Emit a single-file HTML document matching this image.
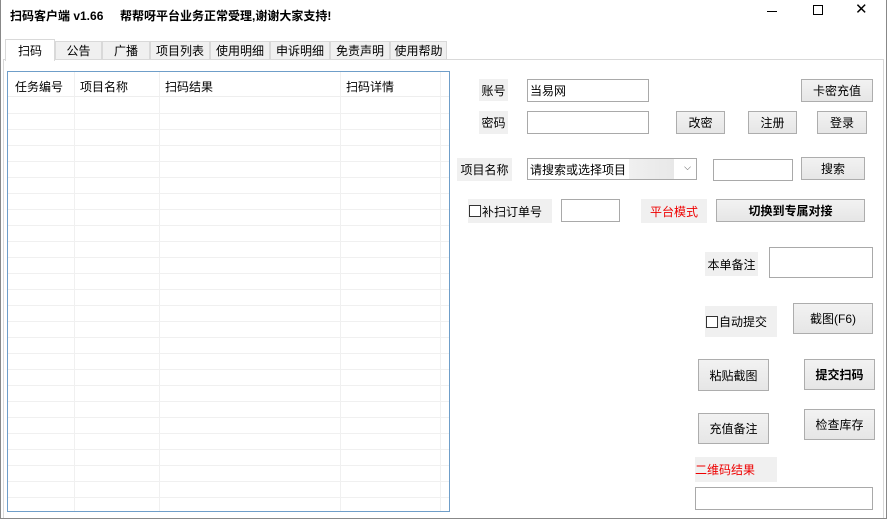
<!DOCTYPE html>
<html><head><meta charset="utf-8"><style>
*{box-sizing:border-box;margin:0;padding:0}
body{width:887px;height:519px;background:#fff;position:relative;overflow:hidden;font-family:"Liberation Sans","Noto Sans CJK SC","WenQuanYi Zen Hei",sans-serif;font-size:12px;color:#000}
.a{position:absolute}
.lbl{position:absolute;background:#f0f0f0;display:flex;align-items:center;justify-content:center;font-size:12px}
.inp{position:absolute;background:#fff;border:1px solid #a9a9a9;font-size:12px;padding-left:2px;display:flex;align-items:center}
.btn{position:absolute;background:linear-gradient(#f2f2f2,#e6e6e6);border:1px solid #adadad;display:flex;align-items:center;justify-content:center;font-size:12px}
.tab{position:absolute;top:41px;height:18px;background:#f0f0f0;border:1px solid #d9d9d9;border-bottom:none;display:flex;align-items:center;justify-content:center;font-size:12px}
.cb{display:inline-block;width:12px;height:12px;border:1px solid #333;background:#fff;margin-right:1px}
.red{color:#e00}
</style></head><body>
<div class="a" style="left:0;top:0;width:1px;height:519px;background:#888"></div>
<div class="a" style="left:886px;top:0;width:1px;height:519px;background:#888"></div>
<div class="a" style="left:0;top:518px;width:887px;height:1px;background:#888"></div>
<div class="a" style="left:10px;top:7px;font-weight:bold;font-size:12px">扫码客户端 v1.66&nbsp;&nbsp;&nbsp;&nbsp;&nbsp;帮帮呀平台业务正常受理,谢谢大家支持!</div>
<div class="a" style="left:767px;top:11px;width:10px;height:1px;background:#000"></div>
<div class="a" style="left:813px;top:5px;width:10px;height:10px;border:1px solid #000"></div>
<div class="a" style="left:855px;top:0px;font-size:15px">✕</div>
<!-- tab frame -->
<div class="a" style="left:3px;top:59px;width:881px;height:459px;border:1px solid #d9d9d9;border-bottom:none"></div>
<div class="tab" style="left:55px;width:47px">公告</div>
<div class="tab" style="left:102px;width:48px">广播</div>
<div class="tab" style="left:150px;width:60px">项目列表</div>
<div class="tab" style="left:210px;width:60px">使用明细</div>
<div class="tab" style="left:270px;width:60px">申诉明细</div>
<div class="tab" style="left:330px;width:60px">免责声明</div>
<div class="tab" style="left:390px;width:57px">使用帮助</div>
<div class="tab" style="left:5px;top:39px;height:22px;width:50px;background:#fff;border-color:#d9d9d9">扫码</div>
<!-- table -->
<div class="a" style="left:7px;top:71px;width:443px;height:441px;border:1px solid #6f9ec9;overflow:hidden">
<svg width="441" height="439" style="position:absolute;left:0;top:0">
<g stroke="#f0f0f0" stroke-width="1">
<line x1="66.5" y1="0" x2="66.5" y2="439"/><line x1="151.5" y1="0" x2="151.5" y2="439"/><line x1="332.5" y1="0" x2="332.5" y2="439"/><line x1="432.5" y1="0" x2="432.5" y2="439"/>
</g>
<g stroke="#eeeeee">
<line x1="0" y1="24.5" x2="441" y2="24.5"/>
</g>
<g stroke="#f0f0f0" id="r"></g>
</svg>
<div class="a" style="left:7px;top:6px">任务编号</div>
<div class="a" style="left:72px;top:6px">项目名称</div>
<div class="a" style="left:157px;top:6px">扫码结果</div>
<div class="a" style="left:338px;top:6px">扫码详情</div>
</div>
<script>
var g=document.getElementById('r'),s='';for(var y=41.5;y<439;y+=16)s+='<line x1="0" y1="'+y+'" x2="441" y2="'+y+'"/>';g.innerHTML=s;
</script>
<!-- right -->
<div class="lbl" style="left:479px;top:79px;width:29px;height:22px">账号</div>
<div class="inp" style="left:527px;top:79px;width:122px;height:23px">当易网</div>
<div class="btn" style="left:801px;top:79px;width:72px;height:23px">卡密充值</div>
<div class="lbl" style="left:479px;top:111px;width:29px;height:23px">密码</div>
<div class="inp" style="left:527px;top:111px;width:122px;height:23px"></div>
<div class="btn" style="left:676px;top:111px;width:49px;height:23px">改密</div>
<div class="btn" style="left:748px;top:111px;width:49px;height:23px">注册</div>
<div class="btn" style="left:817px;top:111px;width:50px;height:23px">登录</div>
<div class="lbl" style="left:457px;top:158px;width:55px;height:23px">项目名称</div>
<div class="inp" style="left:527px;top:158px;width:170px;height:22px;background:linear-gradient(90deg,#fff 0,#fff 60%,#f0f0f0 60%,#e8e8e8 87%,#fff 87%)">请搜索或选择项目<span style="position:absolute;right:5px;top:3px;font-size:9px;color:#444">⌵</span></div>
<div class="inp" style="left:713px;top:159px;width:80px;height:22px"></div>
<div class="btn" style="left:801px;top:157px;width:64px;height:23px">搜索</div>
<div class="lbl" style="left:468px;top:199px;width:84px;height:24px;justify-content:flex-start;padding-left:1px"><span class="cb"></span>补扫订单号</div>
<div class="inp" style="left:561px;top:199px;width:59px;height:23px"></div>
<div class="lbl red" style="left:641px;top:199px;width:66px;height:24px">平台模式</div>
<div class="btn" style="left:716px;top:199px;width:149px;height:23px;font-weight:bold">切换到专属对接</div>
<div class="lbl" style="left:705px;top:252px;width:53px;height:24px">本单备注</div>
<div class="inp" style="left:769px;top:247px;width:104px;height:31px"></div>
<div class="lbl" style="left:705px;top:306px;width:72px;height:31px;justify-content:flex-start;padding-left:1px"><span class="cb"></span>自动提交</div>
<div class="btn" style="left:793px;top:303px;width:80px;height:31px">截图(F6)</div>
<div class="btn" style="left:698px;top:359px;width:71px;height:32px">粘贴截图</div>
<div class="btn" style="left:804px;top:359px;width:71px;height:31px;font-weight:bold">提交扫码</div>
<div class="btn" style="left:698px;top:413px;width:71px;height:31px">充值备注</div>
<div class="btn" style="left:804px;top:409px;width:71px;height:31px">检查库存</div>
<div class="lbl red" style="left:695px;top:457px;width:82px;height:25px;justify-content:flex-start">二维码结果</div>
<div class="inp" style="left:695px;top:487px;width:178px;height:23px"></div>
</body></html>
